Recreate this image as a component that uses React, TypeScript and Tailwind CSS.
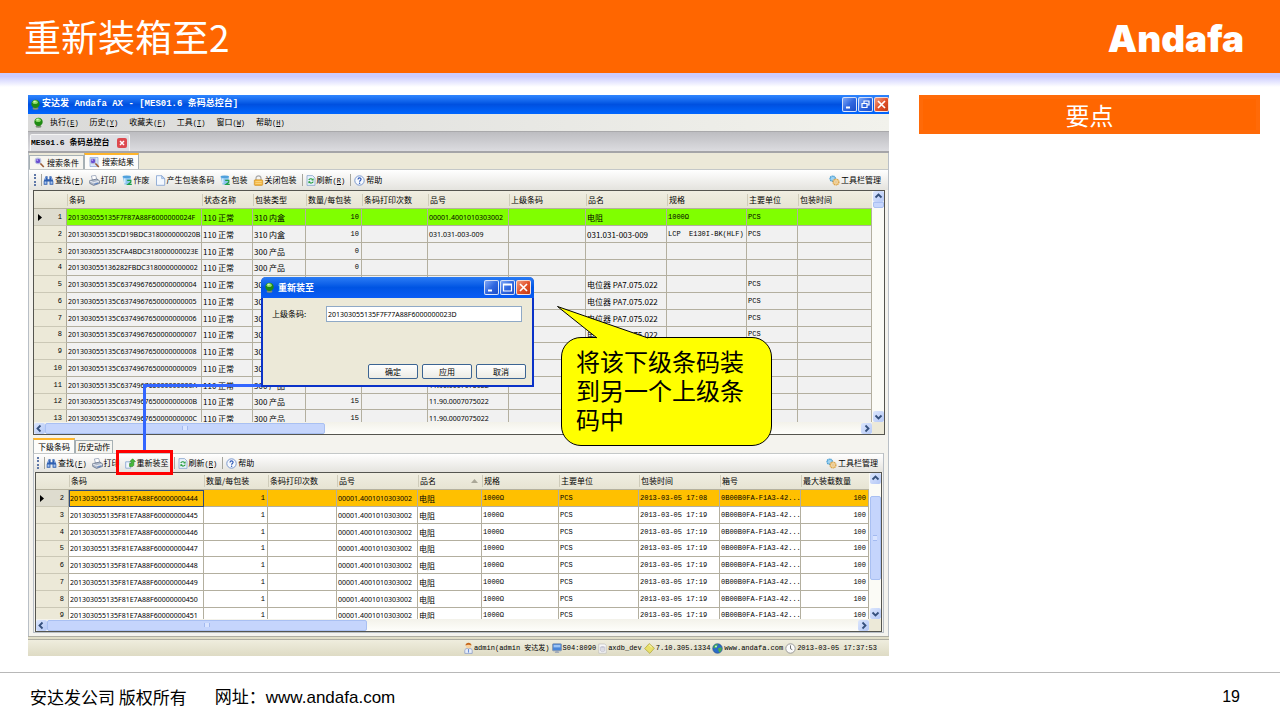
import React, { useState } from 'react';
import clsx from 'clsx';

const GreenBall = () => (
    <svg className="h-[11px] w-[9px] shrink-0" viewBox="0 0 9 11">
        <ellipse cx="4.5" cy="9.4" rx="3" ry="1.3" fill="#7f8f78" />
        <circle cx="4.5" cy="4.9" r="4.2" fill="#1f8a12" />
        <ellipse cx="4.2" cy="3.2" rx="2.6" ry="1.9" fill="#8fdc6a" />
        <ellipse cx="3.6" cy="2.6" rx="1.2" ry=".8" fill="#d4f6c0" />
    </svg>
);

const Binoculars = () => (
    <svg className="h-[11px] w-[11px] shrink-0" viewBox="0 0 11 11">
        <path d="M2.6 1.2h2v3h1.8v-3h2l1.9 5v3.6H6.6V6.4H4.4v3.4H.7V6.2z" fill="#2f5fb0" />
        <path d="M1.5 6.4h2v2.4h-2zM7.5 6.4h2v2.4h-2z" fill="#a9c6f0" />
        <path d="M3 2l-1 3M8 2l1 3" stroke="#8db0e8" strokeWidth=".8" />
    </svg>
);

const Printer = () => (
    <svg className="h-[11px] w-[11px] shrink-0" viewBox="0 0 11 11">
        <path d="M2.4 1l4.2-.6L8 4.6 3.6 5.4z" fill="#fff" stroke="#8794ad" strokeWidth=".7" />
        <path d="M.7 5.6l7-1.6 2.8 1.8v2.6L4.6 10.4.7 8.4z" fill="#aeb8c9" stroke="#5b6880" strokeWidth=".7" />
        <path d="M.9 6l3.8 1.7 5.6-1.6" fill="none" stroke="#eef2f8" strokeWidth=".9" />
        <path d="M5.4 9.2l3.6-1" stroke="#4d79c4" strokeWidth=".9" />
    </svg>
);

const Bin = () => (
    <svg className="h-[11px] w-[11px] shrink-0" viewBox="0 0 11 11">
        <path d="M.6 1.6h8.4L8 10 2.4 9.4z" fill="#8cc4ee" />
        <ellipse cx="4.8" cy="1.8" rx="4.2" ry="1.3" fill="#4fa0dc" />
        <path d="M2.8 3.4v4.8" stroke="#e4f4ff" strokeWidth="1.2" />
        <path d="M5.2 5.4h3.6v1.8L6 9.4h3.8" fill="none" stroke="#1f9e4a" strokeWidth="1.3" />
    </svg>
);

const Page = () => (
    <svg className="h-[11px] w-[11px] shrink-0" viewBox="0 0 11 11">
        <path d="M1.5.7h5.2l3 2.8v6.8H1.5z" fill="#f3f8ff" stroke="#7f9fcf" strokeWidth=".8" />
        <path d="M6.6.7v2.9h3z" fill="#c3d7f2" stroke="#7f9fcf" strokeWidth=".6" />
    </svg>
);

const Lock = () => (
    <svg className="h-[11px] w-[11px] shrink-0" viewBox="0 0 11 11">
        <path d="M3 5V3.3a2.5 2.5 0 0 1 5 0V5" fill="none" stroke="#a9a9a9" strokeWidth="1.2" />
        <rect x="1.3" y="4.8" width="8.4" height="5.6" rx=".8" fill="#f4b640" stroke="#c98a1c" strokeWidth=".6" />
        <path d="M2.4 6.6h6.2M2.4 8.4h6.2" stroke="#fde3a0" strokeWidth=".7" />
    </svg>
);

const Refresh = () => (
    <svg className="h-[11px] w-[10px] shrink-0" viewBox="0 0 10 11">
        <path d="M1 .6h5.6L9 3v7.4H1z" fill="#e9f2fc" stroke="#88a4cc" strokeWidth=".8" />
        <path d="M2.8 5c.6-1.6 3-1.6 3.8-.4M7.2 6.6c-.6 1.8-3 1.8-4 .6" fill="none" stroke="#1f9a36" strokeWidth="1.2" />
        <path d="M5.4 5.4h2.2V3.2zM4.6 6.3H2.4v2.2z" fill="#1f9a36" />
    </svg>
);

const Help = () => (
    <svg className="h-[11px] w-[11px] shrink-0" viewBox="0 0 11 11">
        <circle cx="5.5" cy="5.5" r="4.7" fill="#f6f9fe" stroke="#6e8fc9" strokeWidth=".9" />
        <path d="M4 4.4c0-2 3.1-2 3.1-.1 0 1.2-1.5 1.200-1.5 2.4" fill="none" stroke="#2b56b5" strokeWidth="1.1" />
        <circle cx="5.6" cy="8.2" r=".7" fill="#2b56b5" />
    </svg>
);

const Gears = () => (
    <svg className="h-[11px] w-[11px] shrink-0" viewBox="0 0 11 11">
        <circle cx="3.7" cy="3.7" r="2.6" fill="#9fd3f2" stroke="#4a9fd4" strokeWidth="1.4" strokeDasharray="1.3 .5" />
        <circle cx="7" cy="7" r="2.9" fill="#f7dca6" stroke="#d9a24a" strokeWidth="1.4" strokeDasharray="1.3 .5" />
        <circle cx="7" cy="7" r="1" fill="#fff" stroke="#c98f38" strokeWidth=".5" />
    </svg>
);

const Magnifier = ({ page = false }: { page?: boolean }) => (
    <svg className="h-[11px] w-[11px] shrink-0" viewBox="0 0 11 11">
        {page && <path d="M1 .5h8v9H1z" fill="#dbe8fa" stroke="#8ba6d4" strokeWidth=".7" />}
        <path d="M6 6l3.8 4" stroke="#9a5a34" strokeWidth="1.6" />
        <circle cx="4" cy="3.9" r="2.8" fill="#6a4fd0" stroke="#b9c3e0" strokeWidth="1.1" />
        <circle cx="3.3" cy="3.1" r=".9" fill="#b6a8f4" />
    </svg>
);

const Repack = () => (
    <svg className="h-[11px] w-[11px] shrink-0" viewBox="0 0 11 11">
        <path d="M.7 3.8h3.6l1.4 1.4v5H.7z" fill="#f2f6fd" stroke="#7f9fcf" strokeWidth=".8" />
        <path d="M4.6 8.6V5.4h1.800V3.600H4.800L7.600.8l2.800 2.800H8.800v3c0 1.400-1 2-2.200 2z" fill="#46b83a" stroke="#1f7f1a" strokeWidth=".6" />
    </svg>
);

const Person = () => (
    <svg className="h-3 w-[9px] shrink-0" viewBox="0 0 9 12">
        <path d="M.8 11.4V8.6C.8 7 2.2 6.4 4.5 6.4s3.7.6 3.7 2.2v2.800z" fill="#e8eefa" stroke="#7f93c4" strokeWidth=".7" />
        <circle cx="4.5" cy="3.8" r="2.6" fill="#f8d2a0" />
        <path d="M1.5 3.6C1.5-.2 7.5-.2 7.5 3.6 5.8 2.6 3.4 2.4 1.5 3.6z" fill="#c4671c" />
        <path d="M4.5 7v3.6" stroke="#6a8fd8" strokeWidth="1.1" />
    </svg>
);

const Monitor = () => (
    <svg className="h-[11px] w-[10px] shrink-0" viewBox="0 0 10 11">
        <rect x=".5" y=".8" width="9" height="7" rx=".8" fill="#4a86d8" stroke="#8b98ad" strokeWidth=".9" />
        <path d="M1.6 2h6.8v2.400H1.600z" fill="#9cc4f5" />
        <path d="M3.6 8h2.8l1 2H2.600z" fill="#a2abb9" />
    </svg>
);

const Database = () => (
    <svg className="h-[11px] w-[9px] shrink-0" viewBox="0 0 9 11">
        <path d="M.8 1h6l1.4 1.400v7.800H.8z" fill="#f8f8f8" stroke="#bdbdbd" strokeWidth=".7" />
        <path d="M2.400 4v3.800c0 1.200 4.400 1.200 4.400 0V4" fill="#dcdce4" stroke="#a5a5b4" strokeWidth=".4" />
        <ellipse cx="4.6" cy="4" rx="2.2" ry=".9" fill="#c9c9d6" />
    </svg>
);

const Diamond = () => (
    <svg className="h-[11px] w-[11px] shrink-0" viewBox="0 0 11 11">
        <path d="M5.2.6l5.2 4.600-4.600 5.200L.6 5.600z" fill="#e8e06a" stroke="#aba23a" strokeWidth=".7" />
        <path d="M5.2 2l2.6 2.2" stroke="#fbf8c0" strokeWidth="1" />
    </svg>
);

const Globe = () => (
    <svg className="h-[11px] w-[11px] shrink-0" viewBox="0 0 11 11">
        <circle cx="5.5" cy="5.5" r="4.8" fill="#2a6cc8" stroke="#2c4f80" strokeWidth=".6" />
        <path d="M2 2.8c1.4-1.6 3-1.7 4-1.5L5 4 3 5.200 1.400 5z" fill="#48b04a" />
        <path d="M6 5.2l3.400-1c.8 2-.2 4-2 5.200L6.400 7.600z" fill="#48b04a" />
        <circle cx="4" cy="3.4" r="1" fill="#c8ecd8" />
    </svg>
);

const Clock = () => (
    <svg className="h-[11px] w-[11px] shrink-0" viewBox="0 0 11 11">
        <circle cx="5.5" cy="5.5" r="4.7" fill="#fbfbfb" stroke="#9a9a9a" strokeWidth="1" />
        <path d="M5.5 2.400v3.300l1.800 1" fill="none" stroke="#4a4a4a" strokeWidth=".8" />
    </svg>
);

const Mnemonic = ({ letter }: { letter: string }) => (
    <span className="font-['Liberation_Mono',monospace] text-[7px]">(<u>{letter}</u>)</span>
);

type ToolProps = { icon: React.ReactNode; label: string; letter?: string };

const Tool = ({ icon, label, letter }: ToolProps) => (
    <button className="flex items-center gap-px whitespace-nowrap" type="button">
        {icon}
        <span>{label}{letter && <Mnemonic letter={letter} />}</span>
    </button>
);

const Separator = () => <span className="-mr-[2px] h-3 w-px shrink-0 bg-[#a5a59c]" />;

const Grip = () => (
    <span className="h-3 w-0 border-l-2 border-dotted border-[#5f78a8]" />
);

const WindowButton = ({ kind, label }: { kind: 'min' | 'restore' | 'max' | 'close'; label: string }) => (
    <button
        type="button"
        aria-label={label}
        className={clsx(
            'flex h-[15px] w-[15px] items-center justify-center rounded-[2px] border border-white/80',
            kind === 'close'
                ? 'bg-linear-to-br from-[#f09a7c] via-[#e3532c] to-[#c23a10]'
                : 'bg-linear-to-br from-[#7fa6f5] via-[#3067e0] to-[#1c4cc8]'
        )}
    >
        <svg className="h-[11px] w-[11px]" viewBox="0 0 11 11" fill="none" stroke="#fff">
            {kind === 'min' && <path d="M2 8.5h4" strokeWidth="2" />}
            {kind === 'restore' && <path d="M4 4V2h5v4H7M2 4.500h5v4H2z" strokeWidth="1.2" />}
            {kind === 'max' && <path d="M1.500 2h8v7h-8zM1.500 3h8" strokeWidth="1.2" />}
            {kind === 'close' && <path d="M2 2l7 7M9 2l-7 7" strokeWidth="1.7" />}
        </svg>
    </button>
);

const arrows = {
    up: 'M2.5 6.5l3-3 3 3',
    down: 'M2.5 4.5l3 3 3-3',
    left: 'M6.5 2.5l-3 3 3 3',
    right: 'M4.5 2.5l3 3-3 3',
};

const ScrollButton = ({ dir }: { dir: keyof typeof arrows }) => (
    <button
        type="button"
        aria-label={dir}
        className="flex h-[11px] w-[11px] shrink-0 items-center justify-center rounded-[2px] bg-linear-to-br from-[#dce6fd] to-[#b4c8f6]"
    >
        <svg className="h-[11px] w-[11px]" viewBox="0 0 11 11" fill="none" stroke="#35507c" strokeWidth="1.8">
            <path d={arrows[dir]} />
        </svg>
    </button>
);

type Column = { title: string; width: string; cell?: string; sorted?: boolean };

const mono = "font-['Liberation_Mono','Noto_Sans_CJK_SC',monospace] text-[7px]";
const code = "font-['Noto_Sans',sans-serif] text-[7px]";

const barcodeColumns: Column[] = [
    { title: '条码', width: 'w-[135px]', cell: code },
    { title: '状态名称', width: 'w-[51px]' },
    { title: '包装类型', width: 'w-[53px]' },
    { title: '数量/每包装', width: 'w-[56px]', cell: clsx(mono, 'text-right') },
    { title: '条码打印次数', width: 'w-[66px]' },
    { title: '品号', width: 'w-[81px]', cell: code },
    { title: '上级条码', width: 'w-[77px]' },
    { title: '品名', width: 'w-[81px]' },
    { title: '规格', width: 'w-[80px]', cell: mono },
    { title: '主要单位', width: 'w-[51px]', cell: mono },
    { title: '包装时间', width: '' },
];

const product = (id: string, name = '', unit = '', qty = '15', no = '11.90.0007075022') =>
    [id, '110 正常', '300 产品', qty, '', no, '', name, '', unit, ''];

const potentiometer = '电位器 PA7.075.022';

const barcodeRows = [
    ['201303055135F7F87A88F6000000024F', '110 正常', '310 内盒', '10', '', '00001.4001010303002', '', '电阻', '1000Ω', 'PCS', ''],
    ['201303055135CD19BDC318000000020B', '110 正常', '310 内盒', '10', '', '031.031-003-009', '', '031.031-003-009', 'LCP  E130I-BK(HLF)', 'PCS', ''],
    product('201303055135CFA4BDC318000000023E', '', '', '0', ''),
    product('201303055136282FBDC3180000000002', '', '', '0', ''),
    product('201303055135C6374967650000000004', potentiometer, 'PCS'),
    product('201303055135C6374967650000000005', potentiometer, 'PCS'),
    product('201303055135C6374967650000000006', potentiometer, 'PCS'),
    product('201303055135C6374967650000000007', potentiometer, 'PCS'),
    product('201303055135C6374967650000000008'),
    product('201303055135C6374967650000000009'),
    product('201303055135C637496765000000000A'),
    product('201303055135C637496765000000000B'),
    product('201303055135C637496765000000000C'),
];

const childColumns: Column[] = [
    { title: '条码', width: 'w-[135px]', cell: code },
    { title: '数量/每包装', width: 'w-[64px]', cell: clsx(mono, 'text-right') },
    { title: '条码打印次数', width: 'w-[69px]' },
    { title: '品号', width: 'w-[81px]', cell: code },
    { title: '品名', width: 'w-[64px]', sorted: true },
    { title: '规格', width: 'w-[77px]', cell: mono },
    { title: '主要单位', width: 'w-[80px]', cell: mono },
    { title: '包装时间', width: 'w-[81px]', cell: mono },
    { title: '箱号', width: 'w-[81px]', cell: mono },
    { title: '最大装载数量', width: '', cell: clsx(mono, 'text-right') },
];

const childRows = ['444', '445', '446', '447', '448', '449', '450', '451'].map((n, i) => [
    `201303055135F81E7A88F60000000${n}`,
    '1',
    '',
    '00001.4001010303002',
    '电阻',
    '1000Ω',
    'PCS',
    i === 0 ? '2013-03-05 17:08' : '2013-03-05 17:19',
    '0B00B0FA-F1A3-42...',
    '100',
]);

type GridProps = {
    columns: Column[];
    rows: string[][];
    first: number;
    rowColor: string;
    activeColor: string;
    headHeight: string;
    outlined?: boolean;
};

const Grid = ({ columns, rows, first, rowColor, activeColor, headHeight, outlined }: GridProps) => (
    <table className="w-full table-fixed border-separate border-spacing-0 whitespace-pre">
        <thead>
            <tr className={clsx('bg-linear-to-b from-[#f0eee1] to-[#e6e3d2]', headHeight)}>
                <th className="w-[33px] border-b border-[#b5b19e] p-0" />
                {columns.map((col) => (
                    <th
                        key={col.title}
                        scope="col"
                        className={clsx('border-b border-[#b5b19e] p-0 text-left font-normal leading-3', col.width)}
                    >
                        <div className="flex items-center justify-between border-l border-[#cfccba] pr-1 pl-px">
                            {col.title}
                            {col.sorted && (
                                <svg className="h-1 w-[7px]" viewBox="0 0 7 4"><path d="M0 4l3.5-4L7 4z" fill="#aaa798" /></svg>
                            )}
                        </div>
                    </th>
                ))}
            </tr>
        </thead>
        <tbody>
            {rows.map((row, i) => (
                <tr
                    key={row[0]}
                    className={clsx(
                        '[&>*]:h-[17px] [&>*]:leading-[15px] nth-[4n]:[&>*]:h-4',
                        i === 0 ? activeColor : rowColor
                    )}
                >
                    <th
                        scope="row"
                        className={clsx(
                            'border-r border-b border-r-[#aca899] border-b-[#cbc8b6] p-0 font-normal',
                            i === 0 ? 'bg-[#dedccf]' : 'bg-[#ece9d8]'
                        )}
                    >
                        <div className="flex items-center justify-between px-1">
                            <svg className="h-[7px] w-1" viewBox="0 0 4 7">
                                {i === 0 && <path d="M0 0l4 3.5L0 7z" fill="#000" />}
                            </svg>
                            <span className={mono}>{first + i}</span>
                        </div>
                    </th>
                    {row.map((value, c) => (
                        <td
                            key={columns[c].title}
                            className={clsx(
                                'border-r border-b border-[#b3af9f] py-0 pr-[2px] pl-px',
                                outlined && i === 0 && c === 0 && 'outline outline-[#2c4a7c] -outline-offset-1',
                                columns[c].cell
                            )}
                        >
                            {value}
                        </td>
                    ))}
                </tr>
            ))}
        </tbody>
    </table>
);

const HorizontalScroll = ({ thumb }: { thumb: string }) => (
    <div className="flex h-3">
        <div className="flex min-w-0 flex-1 items-center bg-linear-to-b from-[#f3f2ea] to-[#fefefb]">
            <ScrollButton dir="left" />
            <div className={clsx('flex h-[11px] items-center justify-center rounded-[2px] border border-[#a9c0f2] bg-[#c5d5fc]', thumb)}>
                <span className="h-1 w-1.5 border-x border-[#a3baf0] bg-[#d9e4ff]" />
            </div>
            <div className="ml-auto"><ScrollButton dir="right" /></div>
        </div>
        <div className="w-3 bg-[#ece9d8]" />
    </div>
);

const StatusItem = ({ icon, text }: { icon: React.ReactNode; text: string }) => (
    <span className="flex items-center gap-px whitespace-nowrap">{icon}{text}</span>
);

const menus = [
    ['执行', 'E'],
    ['历史', 'Y'],
    ['收藏夹', 'F'],
    ['工具', 'T'],
    ['窗口', 'W'],
    ['帮助', 'H'],
];

const RepackDialog = () => {
    const [parentCode, setParentCode] = useState('201303055135F7F77A88F6000000023D');

    return (
        <div role="dialog" aria-label="重新装至" className="absolute top-[182px] left-[233px] w-[273px] rounded-t-[5px] border-2 border-t-0 border-[#0a32c8] bg-[#ece9d8]">
            <div className="-mx-0.5 flex h-[21px] items-center gap-1 rounded-t-[5px] bg-linear-to-b from-[#2a7cf5] via-[#0054e3] to-[#0a5cf5] pr-[3px] pl-1">
                <GreenBall />
                <span className="flex-1 font-['Noto_Sans_CJK_SC',sans-serif] text-[9px] font-bold text-white">重新装至</span>
                <div className="flex gap-px">
                    <WindowButton kind="min" label="最小化" />
                    <WindowButton kind="max" label="最大化" />
                    <WindowButton kind="close" label="关闭" />
                </div>
            </div>
            <form className="pt-2 pr-1.5 pb-1.5 pl-[9px]" onSubmit={(e) => e.preventDefault()}>
                <div className="flex items-center pr-1">
                    <label htmlFor="parent-code" className="w-[54px]">上级条码:</label>
                    <input
                        id="parent-code"
                        type="text"
                        className={clsx('h-4 min-w-0 flex-1 border border-[#8fa9c6] bg-white px-px outline-none', code)}
                        value={parentCode}
                        onChange={(e) => setParentCode(e.target.value)}
                    />
                </div>
                <div className="mt-[42px] flex justify-end gap-1">
                    {['确定', '应用', '取消'].map((label) => (
                        <button
                            key={label}
                            type="button"
                            className="h-[15px] w-[50px] rounded-[2px] border border-[#3c6492] bg-linear-to-b from-white to-[#ecebe4] leading-3"
                        >
                            {label}
                        </button>
                    ))}
                </div>
            </form>
        </div>
    );
};

const App = () => {
    return (
        <div className="flex min-h-screen flex-col bg-white font-['Noto_Sans_CJK_SC',sans-serif] text-black">
            <header className="flex h-[73px] items-center justify-between bg-[#ff6600] pr-9 pl-6 text-white">
                <h1 className="text-[37px]">重新装箱至2</h1>
                <span className="pt-1 font-['Inter',sans-serif] text-[37px] font-black">Andafa</span>
            </header>
            <div className="h-[14px] bg-linear-to-b from-[#ccccff] from-25% to-white" />

            <main className="flex flex-1 items-start gap-[30px] pt-2 pr-5 pb-4 pl-7">
                <section className="relative min-w-0 flex-1 bg-[#f4f3ee] text-[8px]">
                    <div className="flex h-[19px] items-center gap-[2px] bg-linear-to-b from-[#2f86ff] via-[#0050e0] to-[#0066ff] pl-[3px]">
                        <GreenBall />
                        <span className="flex-1 font-['Liberation_Mono','Noto_Sans_CJK_SC',monospace] text-[9px] font-bold text-white">
                            安达发 Andafa AX - [MES01.6 条码总控台]
                        </span>
                        <div className="flex gap-px">
                            <WindowButton kind="min" label="最小化" />
                            <WindowButton kind="restore" label="还原" />
                            <WindowButton kind="close" label="关闭" />
                        </div>
                    </div>

                    <nav className="flex h-[17px] items-center gap-[7px] bg-linear-to-r from-[#dadad9] to-[#f2f2ec] pl-1.5">
                        <GreenBall />
                        <div className="flex gap-[11px]">
                            {menus.map(([label, letter]) => (
                                <button key={label} type="button">{label}<Mnemonic letter={letter} /></button>
                            ))}
                        </div>
                    </nav>

                    <div className="flex h-[22px] items-end border-t border-b-2 border-t-[#a9a9ab] border-b-[#a5a5a8] bg-linear-to-b from-[#bdbdc1] to-[#dcdce0] pl-[2px]">
                        <div className="flex h-[17px] items-center gap-2 rounded-t-[2px] border border-b-0 border-[#f4f4f4] bg-[#dedee2] pr-[2px]">
                            <span className="font-['Liberation_Mono','Noto_Sans_CJK_SC',monospace] font-bold">MES01.6 条码总控台</span>
                            <button type="button" aria-label="关闭标签" className="h-[10px] w-[10px] rounded-[2px] bg-[#dd4a4f]">
                                <svg viewBox="0 0 10 10"><path d="M3 3l4 4M7 3L3 7" stroke="#fff" strokeWidth="1.5" /></svg>
                            </button>
                        </div>
                    </div>

                    <div className="border-x border-[#b9bfc6] pb-[3px]">
                        <div role="tablist" className="flex h-4 items-end bg-[#ece9d8]">
                            <button role="tab" type="button" className="flex h-[14px] items-center gap-[2px] border border-b-0 border-[#a6b0b4] bg-[#f6f5f0] px-1">
                                <Magnifier />搜索条件
                            </button>
                            <button role="tab" type="button" aria-selected="true" className="flex h-4 items-center gap-[2px] border border-t-2 border-b-0 border-[#a6b0b4] border-t-[#ffb52a] bg-[#fcfcfa] px-1">
                                <Magnifier page />搜索结果
                            </button>
                        </div>

                        <div className="flex h-[21px] items-center gap-[5px] border-t border-[#c4c8c8] bg-linear-to-b from-white to-[#e4e3de] pr-[7px] pl-[5px]">
                            <Grip />
                            <Separator />
                            <div className="-ml-[2px] flex items-center gap-[5px]">
                                <Tool icon={<Binoculars />} label="查找" letter="F" />
                                <Tool icon={<Printer />} label="打印" />
                                <Tool icon={<Bin />} label="作废" />
                                <Tool icon={<Page />} label="产生包装条码" />
                                <Tool icon={<Bin />} label="包装" />
                                <Tool icon={<Lock />} label="关闭包装" />
                                <Separator />
                                <Tool icon={<Refresh />} label="刷新" letter="R" />
                                <Separator />
                                <Tool icon={<Help />} label="帮助" />
                            </div>
                            <div className="ml-auto"><Tool icon={<Gears />} label="工具栏管理" /></div>
                        </div>

                        <div className="mr-[3px] ml-1 border border-[#55554f] bg-white">
                            <div className="flex h-[231px]">
                                <div className="min-w-0 flex-1 overflow-hidden">
                                    <Grid
                                        columns={barcodeColumns}
                                        rows={barcodeRows}
                                        first={1}
                                        rowColor="bg-[#f1f1f1]"
                                        activeColor="bg-[#80ff00]"
                                        headHeight="h-[18px]"
                                    />
                                </div>
                                <div className="flex w-3 flex-col items-center bg-[#fbfbf6]">
                                    <ScrollButton dir="up" />
                                    <div className="h-1.5 w-[11px] rounded-b-[2px] border border-[#a9c0f2] bg-[#c5d5fc]" />
                                    <div className="mt-auto"><ScrollButton dir="down" /></div>
                                </div>
                            </div>
                            <HorizontalScroll thumb="w-[280px]" />
                        </div>

                        <div role="tablist" className="mt-[3px] flex h-[15px] items-end pl-1">
                            <button role="tab" type="button" aria-selected="true" className="h-[15px] border border-t-2 border-b-0 border-[#a6b0b4] border-t-[#ffb52a] bg-[#fcfcfa] px-1 leading-3">
                                下级条码
                            </button>
                            <button role="tab" type="button" className="h-[13px] border border-b-0 border-[#a6b0b4] bg-[#f6f5f0] px-[2px] leading-3">
                                历史动作
                            </button>
                        </div>

                        <div className="mx-1 border-x border-b border-[#b9bfc6]">
                            <div className="flex h-[19px] items-center gap-[5px] border-t border-[#c4c8c8] bg-linear-to-b from-white to-[#e4e3de] pr-[5px] pl-[3px]">
                                <Grip />
                                <Separator />
                                <div className="-ml-[2px] flex items-center gap-[5px]">
                                    <Tool icon={<Binoculars />} label="查找" letter="F" />
                                    <Tool icon={<Printer />} label="打印" />
                                    <Tool icon={<Repack />} label="重新装至" />
                                    <Separator />
                                    <Tool icon={<Refresh />} label="刷新" letter="R" />
                                    <Separator />
                                    <Tool icon={<Help />} label="帮助" />
                                </div>
                                <div className="ml-auto"><Tool icon={<Gears />} label="工具栏管理" /></div>
                            </div>

                            <div className="mx-px border border-[#55554f] bg-white">
                                <div className="flex h-[146px]">
                                    <div className="min-w-0 flex-1 overflow-hidden">
                                        <Grid
                                            columns={childColumns}
                                            rows={childRows}
                                            first={2}
                                            rowColor="bg-white"
                                            activeColor="bg-[#ffc000]"
                                            headHeight="h-[17px]"
                                            outlined
                                        />
                                    </div>
                                    <div className="flex w-3 flex-col items-center bg-[#fbfbf6]">
                                        <ScrollButton dir="up" />
                                        <div className="mt-3 flex h-[84px] w-[11px] items-center justify-center rounded-[2px] border border-[#a9c0f2] bg-[#c5d5fc]">
                                            <span className="h-1.5 w-1 border-y border-[#a3baf0] bg-[#d9e4ff]" />
                                        </div>
                                        <div className="mt-auto"><ScrollButton dir="down" /></div>
                                    </div>
                                </div>
                                <HorizontalScroll thumb="w-[320px]" />
                            </div>
                        </div>
                    </div>

                    <div className={clsx('flex h-5 items-center justify-end gap-[2px] border-t-4 border-double border-[#aeada2] bg-linear-to-b from-[#efedde] to-[#dedbc4] pr-3', mono)}>
                        <StatusItem icon={<Person />} text="admin(admin 安达发)" />
                        <StatusItem icon={<Monitor />} text="S04:8090" />
                        <StatusItem icon={<Database />} text="axdb_dev" />
                        <StatusItem icon={<Diamond />} text="7.10.305.1334" />
                        <StatusItem icon={<Globe />} text="www.andafa.com" />
                        <StatusItem icon={<Clock />} text="2013-03-05 17:37:53" />
                    </div>

                    {/* connector from the toolbar button to the dialog it opens */}
                    <div className="absolute top-[289px] left-[115px] h-[67px] w-[119px] border-t-3 border-l-3 border-[#3366ff]" />
                    <div className="absolute top-[355px] left-[88px] h-[25px] w-[57px] border-3 border-[#ff0000]" />

                    <RepackDialog />

                    <div className="absolute top-[242px] left-[533px] w-[211px] rounded-[20px] border border-black bg-[#ffff00] pt-2 pr-3 pb-3 pl-[14px]">
                        <svg className="absolute -top-8 -left-[5px] h-[33px] w-[93px]" viewBox="0 0 93 33">
                            <path d="M40 32L.5.5 91 32v1H40z" fill="#ffff00" />
                            <path d="M40 32L.5.5 91 32" fill="none" stroke="#000" />
                        </svg>
                        <p className="text-2xl leading-[29px]">将该下级条码装到另一个上级条码中</p>
                    </div>
                </section>

                <aside className="w-[341px] shrink-0">
                    <h2 className="flex h-[39px] items-center justify-center border-4 border-[#ff6a08] bg-[#ff6600] text-2xl text-white">要点</h2>
                </aside>
            </main>

            <footer className="flex h-12 items-center justify-between border-t border-[#b8b8b8] pr-10 pl-[30px] text-[17px]">
                <div className="flex items-center gap-7">
                    <span>安达发公司 版权所有</span>
                    <span>网址：<a className="font-['Liberation_Sans',sans-serif]" href="#">www.andafa.com</a></span>
                </div>
                <span className="font-['Liberation_Sans',sans-serif] text-base">19</span>
            </footer>
        </div>
    );
};

export default App;
